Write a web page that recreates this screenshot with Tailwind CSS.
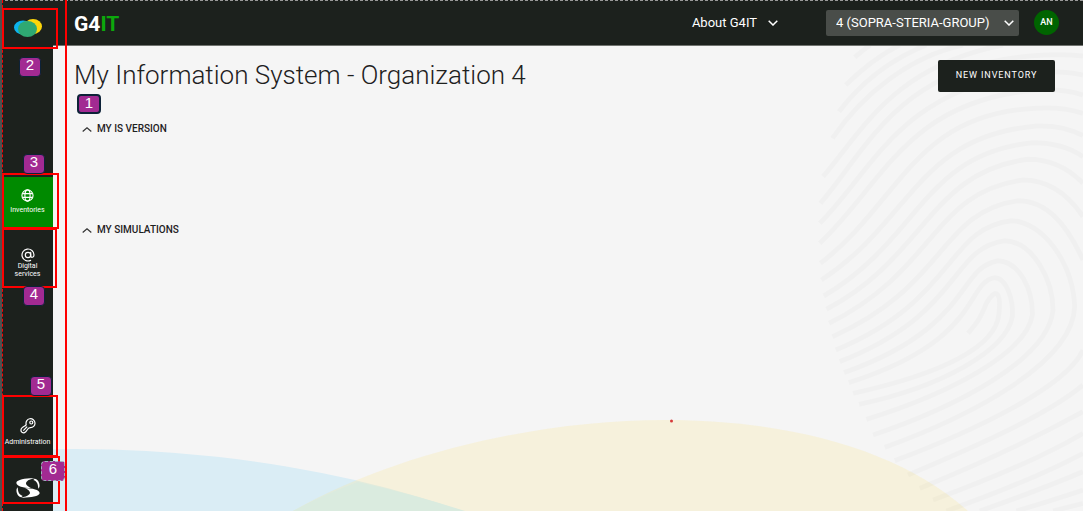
<!DOCTYPE html>
<html lang="en">
<head>
<meta charset="utf-8">
<meta name="viewport" content="width=device-width, initial-scale=1">
<title>G4IT - My Information System</title>
<script src="https://cdn.jsdelivr.net/npm/@tailwindcss/browser@4"></script>
</head>
<body class="relative flex min-h-screen overflow-hidden bg-[#f5f5f5] font-[Roboto,sans-serif] text-[#1e211e]">

<!-- Sidebar -->
<nav aria-label="Main" class="flex w-[53px] shrink-0 flex-col bg-[#1c211d] pl-[2px] text-white">
  <a href="#" aria-label="Home" class="flex h-[177px] items-start justify-center pt-[18px]">
    <svg class="h-5 w-7" viewBox="0 0 28 20">
      <ellipse cx="9" cy="9.500" rx="9" ry="7" fill="#0cb4ee"/>
      <ellipse cx="19" cy="8.500" rx="9" ry="7.500" fill="#fdd60a"/>
      <ellipse cx="13.500" cy="11" rx="9.500" ry="8" fill="#2fa972"/>
    </svg>
  </a>
  <a href="#" aria-current="page" class="flex h-[50px] flex-col items-center bg-[#008a00] pt-3">
    <svg class="size-[13px]" viewBox="0 0 14 14" fill="none" stroke="#fff" stroke-width="1.200">
      <circle cx="7" cy="7" r="6"/><ellipse cx="7" cy="7" rx="2.800" ry="6"/><path d="M1.500 5h11M1.500 9h11"/>
    </svg>
    <span class="mt-1 text-[7px] leading-2">Inventories</span>
  </a>
  <a href="#" class="flex h-[60px] flex-col items-center pt-[21px]">
    <svg class="size-[14px] shrink-0" viewBox="0 0 14 14" fill="none" stroke="#fff" stroke-width="1.200" stroke-linecap="round">
      <circle cx="7" cy="7" r="2.700"/><path d="M9.700 4.400v3.400c0 2.200 3.300 2 3.300-.8A6 6 0 1 0 9.600 12.400"/>
    </svg>
    <span class="text-center text-[7px] leading-2">Digital<br>services</span>
  </a>
  <a href="#" class="mt-auto flex h-[51px] flex-col items-center pt-[9px]">
    <svg class="size-4 shrink-0" viewBox="0 0 16 16" fill="none" stroke="#fff" stroke-width="1.200" stroke-linejoin="round">
      <path d="M6.200 6.500A4.500 4.500 0 1 1 10.200 9.700C8.500 9.700 8 10.500 6.900 12.300 5.500 14.800 3.500 15.300 2 14.300.500 13 .600 11 2.200 9.600 4 8.100 5.800 8 6.200 6.500Z"/>
      <circle cx="11.300" cy="4.500" r="1.500"/><path d="M7.200 8.600 3.300 12.700"/>
    </svg>
    <span class="mt-1 text-[7px] leading-2">Administration</span>
  </a>
  <a href="#" aria-label="Sopra Steria" class="flex h-[51px] items-start justify-center pt-[18px]">
    <svg class="h-5 w-6" viewBox="11 11 72 60" fill="#fff">
      <path d="M68 12C45 11 14 15 12 25C12 36 34 40 56 41C42 34 38 27 43 22C48 16 58 14 68 12Z"/>
      <path d="M67 13C80 14 86 36 78 43C77 30 75 21 63 17Z"/>
      <path d="M26 70C49 71 80 67 82 57C82 46 60 42 38 41C52 48 56 55 51 60C46 66 36 68 26 70Z"/>
      <path d="M27 69C14 68 8 46 16 39C17 52 19 61 31 65Z"/>
    </svg>
  </a>
</nav>

<div class="flex min-w-0 grow flex-col">
  <!-- Top bar -->
  <header class="flex h-[46px] items-center border-b border-[#70736f] bg-[#1c211d] pr-6 pl-[21px] text-white">
    <a href="#" class="pt-[3px] text-[21px] leading-7 font-bold">G4<span class="text-[#0ca80c]">IT</span></a>
    <button type="button" class="ml-auto flex items-center gap-[11px] text-[13px]">About G4IT
      <svg class="h-[6px] w-[10px]" viewBox="0 0 10 6" fill="none" stroke="#fff" stroke-width="1.500"><path d="m.7.700 4.300 4.300L9.300.700"/></svg>
    </button>
    <div class="relative ml-12">
      <select aria-label="Organization" class="h-[26px] w-[193px] appearance-none rounded-xs bg-[#494d49] pl-[10px] text-[13px]">
        <option>4 (SOPRA-STERIA-GROUP)</option>
      </select>
      <svg class="pointer-events-none absolute top-[10px] right-[5px] h-[6px] w-[10px]" viewBox="0 0 10 6" fill="none" stroke="#fff" stroke-width="1.500"><path d="m.7.700 4.300 4.300L9.300.700"/></svg>
    </div>
    <button type="button" aria-label="Account" class="ml-[15px] size-[25px] rounded-full bg-[#006400] text-[9px] font-medium">AN</button>
  </header>

  <main class="relative grow">
    <!-- Background artwork -->
    <svg aria-hidden="true" class="absolute bottom-0 left-0 h-[100px] w-full" viewBox="53 411 1030 100" preserveAspectRatio="none">
      <ellipse cx="75" cy="853" rx="728" ry="404" fill="#daedf5"/>
      <path d="M293 511C398 452 540 420 665 420C790 420 900 450 968 511Z" fill="#fbe88f" opacity=".24"/>
      <path d="M293 511Q325 494 358 482Q412 494 465 511Z" fill="#daebdf"/>
      <circle cx="671.500" cy="421" r="1.500" fill="#d63a3a"/>
    </svg>
    <svg aria-hidden="true" class="absolute top-0 right-0 h-[465px] w-[300px]" viewBox="0 18 900 1395" fill="none" stroke="#000" stroke-opacity=".018" stroke-width="15">
      <path d="M215 52Q240 30 262 15"/>
      <path d="M188 135Q270 55 350 15"/>
      <path d="M168 215Q270 80 430 15"/>
      <path d="M148 295C240 160 380 50 540 15"/>
      <path d="M120 410C240 270 330 80 660 15"/>
      <path d="M112 490C250 330 350 80 740 48Q830 40 900 48"/>
      <path d="M110 550C270 390 350 150 740 98Q830 90 900 105"/>
      <path d="M110 610C300 430 370 190 740 152Q830 143 900 165"/>
      <path d="M112 670C350 490 390 220 760 205Q840 200 900 220"/>
      <path d="M115 720C390 540 400 290 760 258Q840 255 900 287"/>
      <path d="M122 768C410 600 420 340 750 308Q840 308 900 350"/>
      <path d="M130 808C430 650 440 395 735 358Q830 358 900 430"/>
      <path d="M138 850C460 690 450 455 720 420C800 420 860 470 900 530"/>
      <path d="M148 890C490 740 470 515 705 482C790 482 850 550 900 660"/>
      <path d="M158 930C520 780 490 565 685 542C780 545 870 670 875 800C870 970 560 1130 305 1222"/>
      <path d="M170 965C540 820 500 625 665 602C750 605 810 720 810 810C795 960 520 1100 270 1185"/>
      <path d="M183 998C570 860 520 685 645 662C710 665 750 750 748 825C730 940 500 1060 250 1138"/>
      <path d="M197 1028C600 900 545 730 635 713C670 713 692 780 688 830C670 930 480 1040 228 1093"/>
      <path d="M210 1060C480 1000 640 920 648 820C655 750 635 745 610 790C590 840 580 850 555 880"/>
      <path d="M335 1262C580 1170 850 1040 900 930"/>
      <path d="M375 1305C600 1210 800 1120 900 1035"/>
      <path d="M410 1345C620 1260 800 1170 900 1115"/>
      <path d="M450 1380C640 1310 800 1240 900 1180"/>
      <path d="M490 1413Q750 1320 900 1240"/>
      <path d="M590 1413Q770 1350 900 1295"/>
      <path d="M700 1413Q810 1380 900 1350"/>
      <path d="M810 1413L900 1390"/>
    </svg>

    <div class="relative pt-[14px] pr-7 pl-[21px]">
      <div class="flex items-start justify-between">
        <h1 class="text-[26px] leading-[30px] font-light">My Information System - Organization 4</h1>
        <button type="button" class="h-8 w-[117px] rounded-xs bg-[#1c211d] text-[9px] tracking-widest text-white">NEW INVENTORY</button>
      </div>
      <section class="mt-[29px] h-[101px] pl-2">
        <button type="button" class="flex items-center gap-[5px] text-[10px] leading-4 font-medium">
          <svg class="h-[5px] w-[10px]" viewBox="0 0 10 5" fill="none" stroke="#333" stroke-width="1.200"><path d="M.7 4.500 5 .8l4.300 3.700"/></svg>MY IS VERSION
        </button>
      </section>
      <section class="pl-2">
        <button type="button" class="flex items-center gap-[5px] text-[10px] leading-4 font-medium">
          <svg class="h-[5px] w-[10px]" viewBox="0 0 10 5" fill="none" stroke="#333" stroke-width="1.200"><path d="M.7 4.500 5 .8l4.300 3.700"/></svg>MY SIMULATIONS
        </button>
      </section>
    </div>
  </main>
</div>

<!-- Numbered callouts laid over the interface -->
<div class="pointer-events-none absolute inset-0 font-['Liberation_Sans',sans-serif] text-[15px] leading-[14px] text-white">
  <div class="absolute inset-x-0 top-0 border-t border-dashed border-[#9a9a9a]"></div>
  <div class="absolute inset-y-0 left-0 w-[2px] bg-[#4d5150]"></div>
  <div class="absolute inset-y-0 left-[2px] w-[65px] border-r-2 border-l border-[#f00] [border-left-style:dashed]"></div>
  <div class="absolute top-[8px] left-[2px] h-[41px] w-[56px] border-2 border-[#f00]"></div>
  <div class="absolute top-[173px] left-[2px] h-[56px] w-[57px] border-2 border-[#f00]"></div>
  <div class="absolute top-[228px] left-[2px] h-[60px] w-[55px] border-2 border-[#f00]"></div>
  <div class="absolute top-[395px] left-[2px] h-[62px] w-[56px] border-2 border-[#f00]"></div>
  <div class="absolute top-[456px] left-[2px] h-[48px] w-[58px] border-2 border-[#f00]"></div>
  <div class="absolute top-[94px] left-[77px] h-5 w-6 rounded-sm border-2 border-[#0d2238] bg-[#a22a92] text-center">1</div>
  <div class="absolute top-[57px] left-[19px] h-5 w-[22px] rounded-sm border border-[#0d2238] bg-[#a22a92] text-center">2</div>
  <div class="absolute top-[154px] left-[23px] h-5 w-[22px] rounded-sm border border-[#0d2238] bg-[#a22a92] text-center">3</div>
  <div class="absolute top-[286px] left-[23px] h-5 w-[22px] rounded-sm border border-[#0d2238] bg-[#a22a92] text-center">4</div>
  <div class="absolute top-[376px] left-[30px] h-5 w-[22px] rounded-sm border border-[#0d2238] bg-[#a22a92] text-center">5</div>
  <div class="absolute top-[461px] left-[41px] h-5 w-6 rounded-sm border border-dashed border-[#9fb0bd] bg-[#a22a92] text-center">6</div>
</div>
</body>
</html>
